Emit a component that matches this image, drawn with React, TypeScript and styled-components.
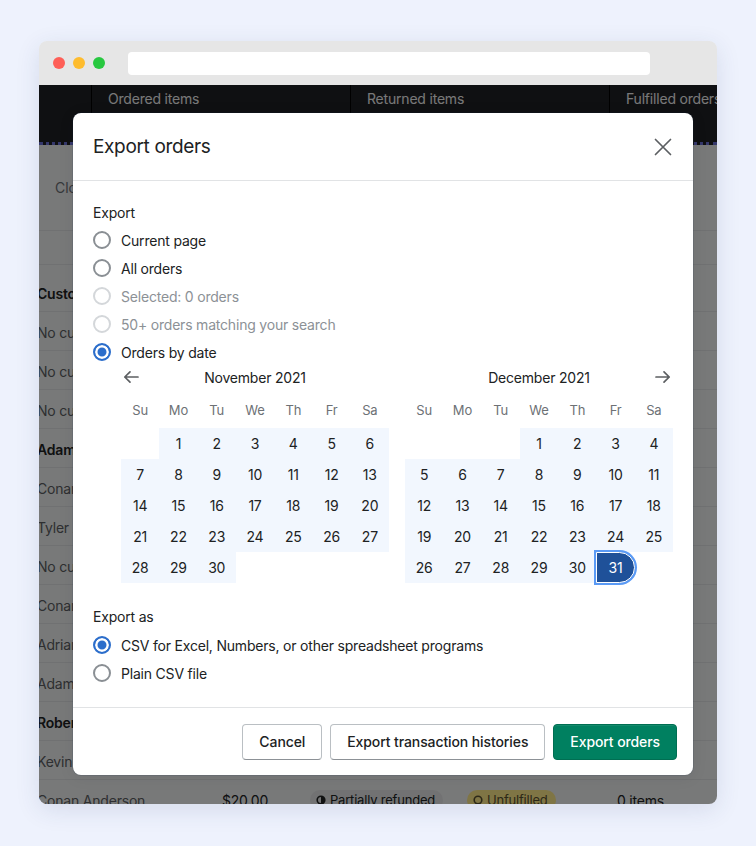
import React from 'react';
import styled, { createGlobalStyle, css } from 'styled-components';

const GlobalStyle = createGlobalStyle`
  html, body {
    margin: 0;
    padding: 0;
  }
  body {
    background: #eef2fd;
    font-family: Inter, "Noto Sans", sans-serif;
    -webkit-font-smoothing: antialiased;
  }
  * {
    box-sizing: border-box;
  }
`

const Stage = styled.div`
  width: 756px;
  height: 846px;
  padding: 41px 39px 0 39px;
`

const Window = styled.div`
  width: 678px;
  height: 763px;
  border-radius: 8px;
  overflow: hidden;
  display: flex;
  flex-direction: column;
  box-shadow: 0 6px 24px rgba(40, 60, 110, 0.12);
`

const TitleBar = styled.div`
  height: 44px;
  flex-shrink: 0;
  background: #e6e6e6;
  display: flex;
  align-items: center;
  padding-left: 14px;
  gap: 8px;
`

const Light = styled.span<{ $color: string }>`
  width: 12px;
  height: 12px;
  border-radius: 50%;
  background: ${p => p.$color};
`

const UrlBar = styled.div`
  margin-left: 15px;
  width: 522px;
  height: 23px;
  border-radius: 4px;
  background: #ffffff;
`

const Viewport = styled.div`
  position: relative;
  flex: 1;
  overflow: hidden;
  background: #f1f2f3;
`

/* ---------- page behind the modal ---------- */

const StatsBar = styled.div`
  height: 60px;
  background: #1e2024;
  display: grid;
  grid-template-columns: 52px 259px 259px 1fr;
  border-bottom: 3px dotted #6a70d8;
`

const StatCell = styled.div`
  border-left: 1px solid #000;
  padding: 5px 16px 0;
  font-size: 14px;
  line-height: 18px;
  color: #f2f2f2;
  white-space: nowrap;
  letter-spacing: -0.2px;
  &:first-child {
    border-left: none;
  }
`

const TabsRow = styled.div`
  height: 86px;
  display: flex;
  align-items: center;
  padding: 0 0 0 16px;
  font-size: 14px;
  color: #6d7175;
  border-bottom: 1px solid #e1e3e5;
`

const FilterRow = styled.div`
  height: 34px;
  border-bottom: 1px solid #e1e3e5;
`

const Table = styled.div`
  margin-left: -2px;
`

const Row = styled.div<{ $head?: boolean }>`
  display: grid;
  grid-template-columns: 185px 88px 157px 150px 1fr;
  align-items: center;
  height: ${p => (p.$head ? 47 : 39)}px;
  padding-top: ${p => (p.$head ? 10 : 2)}px;
  border-bottom: 1px solid #e1e3e5;
  font-size: 14px;
  letter-spacing: -0.2px;
  color: #202223;
  white-space: nowrap;
`

const Name = styled.span<{ $strong?: boolean }>`
  color: ${p => (p.$strong ? '#202223' : '#5c5f62')};
  font-weight: ${p => (p.$strong ? 600 : 400)};
`

const Badge = styled.span<{ $tone: 'info' | 'warn' }>`
  justify-self: start;
  display: inline-flex;
  align-items: center;
  gap: 4px;
  height: 20px;
  padding: 0 8px 0 6px;
  border-radius: 10px;
  font-size: 13px;
  ${p =>
    p.$tone === 'warn'
      ? css`
          background: #ffea8a;
          color: #595130;
        `
      : css`
          background: #e4e5e7;
          color: #202223;
        `}
`

/* ---------- modal ---------- */

const Overlay = styled.div`
  position: absolute;
  inset: 0;
  background: rgba(0, 0, 0, 0.5);
`

const ModalLayer = styled.div`
  position: absolute;
  inset: 0;
  display: flex;
  align-items: flex-start;
  padding: 28px 0 0 34px;
`

const Modal = styled.div`
  width: 620px;
  background: #ffffff;
  border-radius: 8px;
  box-shadow: 0 0 0 1px rgba(6, 44, 82, 0.1), 0 2px 16px rgba(33, 43, 54, 0.08);
  display: flex;
  flex-direction: column;
  color: #202223;
`

const ModalHeader = styled.div`
  height: 68px;
  padding: 0 20px;
  display: flex;
  align-items: center;
  justify-content: space-between;
  border-bottom: 1px solid #e1e3e5;
`

const Title = styled.h2`
  margin: 0;
  font-size: 19px;
  font-weight: 400;
  line-height: 28px;
  letter-spacing: -0.35px;
`

const IconButton = styled.button`
  border: none;
  background: none;
  padding: 0;
  width: 20px;
  height: 20px;
  display: flex;
  align-items: center;
  justify-content: center;
  cursor: pointer;
`

const ModalBody = styled.div`
  padding: 22px 20px 20px;
  letter-spacing: -0.2px;
`

const Label = styled.div<{ $gap?: number }>`
  font-size: 14px;
  line-height: 20px;
  margin-top: ${p => p.$gap ?? 0}px;
`

const RadioList = styled.div<{ $gap?: number }>`
  margin-top: ${p => p.$gap ?? 3}px;
  display: flex;
  flex-direction: column;
`

const RadioRow = styled.label<{ $disabled?: boolean }>`
  height: 28px;
  display: flex;
  align-items: center;
  gap: 10px;
  font-size: 14px;
  color: ${p => (p.$disabled ? '#8c9196' : '#202223')};
`

const RadioDot = styled.span<{ $state: 'off' | 'on' | 'disabled' }>`
  width: 18px;
  height: 18px;
  border-radius: 50%;
  flex-shrink: 0;
  ${p =>
    p.$state === 'on'
      ? css`
          border: 2px solid #2c6ecb;
          background: #2c6ecb;
          box-shadow: inset 0 0 0 2.5px #fff;
        `
      : css`
          border: 2px solid ${p.$state === 'off' ? '#8a8f94' : '#d4d7da'};
          background: #fff;
        `}
`

const Calendars = styled.div`
  margin-left: 28px;
  display: flex;
  gap: 16px;
`

const Month = styled.div`
  width: 268px;
`

const MonthHeader = styled.div`
  height: 22px;
  display: grid;
  grid-template-columns: 24px 1fr 24px;
  align-items: center;
`

const MonthTitle = styled.div`
  text-align: center;
  font-size: 14px;
  line-height: 20px;
  padding-top: 2px;
`

const ArrowSlot = styled.div<{ $side: 'left' | 'right' }>`
  display: flex;
  justify-content: ${p => (p.$side === 'left' ? 'flex-start' : 'flex-end')};
  padding: 0 2px;
`

const Weekdays = styled.div`
  margin-top: 10px;
  height: 24px;
  display: grid;
  grid-template-columns: repeat(7, 1fr);
  align-items: center;
  text-align: center;
  font-size: 13px;
  color: #6d7175;
`

const Days = styled.div`
  margin-top: 6px;
  display: grid;
  grid-template-columns: repeat(7, 1fr);
  grid-auto-rows: 31px;
`

const Day = styled.div<{ $kind: 'empty' | 'range' | 'end' }>`
  display: flex;
  align-items: center;
  justify-content: center;
  font-size: 14px;
  ${p =>
    p.$kind === 'range' &&
    css`
      background: #f2f7fe;
    `}
  ${p =>
    p.$kind === 'end' &&
    css`
      background: #1f5199;
      color: #fff;
      border: 1px solid #fff;
      border-radius: 0 16px 16px 0;
      box-shadow: 0 0 0 2px #5a9af5;
      position: relative;
      z-index: 1;
    `}
`

const Footer = styled.div`
  height: 68px;
  padding: 0 16px;
  border-top: 1px solid #e1e3e5;
  display: flex;
  align-items: center;
  justify-content: flex-end;
  gap: 8px;
`

const Button = styled.button<{ $primary?: boolean }>`
  height: 36px;
  padding: 0 16px;
  border-radius: 4px;
  font-family: inherit;
  font-size: 14px;
  font-weight: 500;
  letter-spacing: -0.1px;
  cursor: pointer;
  ${p =>
    p.$primary
      ? css`
          background: #008060;
          color: #fff;
          border: 1px solid #006e52;
          box-shadow: inset 0 1px 0 rgba(255, 255, 255, 0.08);
        `
      : css`
          background: #fff;
          color: #202223;
          border: 1px solid #babfc3;
          border-bottom-color: #8c9196;
        `}
`

const ArrowIcon = ({ dir }: { dir: 'left' | 'right' }) => (
  <svg width="16" height="16" viewBox="0 0 16 16" fill="none">
    <path
      d={dir === 'left' ? 'M15 8H1.8M7 2.8L1.8 8 7 13.2' : 'M1 8h13.2M9 2.8L14.2 8 9 13.2'}
      stroke="#5c5f62"
      strokeWidth="1.7"
      strokeLinecap="round"
      strokeLinejoin="round"
    />
  </svg>
)

const CloseIcon = () => (
  <svg width="18" height="18" viewBox="0 0 18 18" fill="none">
    <path d="M1.5 1.5l15 15M16.5 1.5l-15 15" stroke="#5c5f62" strokeWidth="1.7" strokeLinecap="round" />
  </svg>
)

const BadgeIcon = ({ half }: { half?: boolean }) => (
  <svg width="10" height="10" viewBox="0 0 10 10">
    <circle cx="5" cy="5" r="3.8" fill="none" stroke="currentColor" strokeWidth="1.6" />
    {half && <path d="M5 1.2A3.8 3.8 0 0 1 5 8.8Z" fill="currentColor" />}
  </svg>
)

const weekdays = ['Su', 'Mo', 'Tu', 'We', 'Th', 'Fr', 'Sa']

interface MonthProps {
  title: string
  offset: number
  length: number
  arrow?: 'left' | 'right'
  endDay?: number
}

const MonthView = ({ title, offset, length, arrow, endDay }: MonthProps) => {
  const cells: (number | null)[] = []
  for (let i = 0; i < offset; i++) cells.push(null)
  for (let d = 1; d <= length; d++) cells.push(d)

  return (
    <Month>
      <MonthHeader>
        <ArrowSlot $side="left">{arrow === 'left' && <ArrowIcon dir="left" />}</ArrowSlot>
        <MonthTitle>{title}</MonthTitle>
        <ArrowSlot $side="right">{arrow === 'right' && <ArrowIcon dir="right" />}</ArrowSlot>
      </MonthHeader>
      <Weekdays>
        {weekdays.map(w => (
          <span key={w}>{w}</span>
        ))}
      </Weekdays>
      <Days>
        {cells.map((d, i) => (
          <Day key={i} $kind={d === null ? 'empty' : d === endDay ? 'end' : 'range'}>
            {d}
          </Day>
        ))}
      </Days>
    </Month>
  )
}

const rows = [
  { name: 'No customer' },
  { name: 'No customer' },
  { name: 'No customer' },
  { name: 'Adam Smith', strong: true },
  { name: 'Conan Anderson' },
  { name: 'Tyler Adams' },
  { name: 'No customer' },
  { name: 'Conan Anderson' },
  { name: 'Adrian Miller' },
  { name: 'Adam Smith' },
  { name: 'Robert Brown', strong: true },
  { name: 'Kevin Jones' },
  { name: 'Conan Anderson' },
]

const exportOptions = [
  { label: 'Current page', state: 'off' as const },
  { label: 'All orders', state: 'off' as const },
  { label: 'Selected: 0 orders', state: 'disabled' as const },
  { label: '50+ orders matching your search', state: 'disabled' as const },
  { label: 'Orders by date', state: 'on' as const },
]

const App = () => {
  return (
    <Stage>
      <GlobalStyle />
      <Window>
        <TitleBar>
          <Light $color="#fe5f57" />
          <Light $color="#febc2e" />
          <Light $color="#28c840" />
          <UrlBar />
        </TitleBar>
        <Viewport>
          <StatsBar>
            <StatCell />
            <StatCell>Ordered items</StatCell>
            <StatCell>Returned items</StatCell>
            <StatCell>Fulfilled orders</StatCell>
          </StatsBar>
          <TabsRow>Closed</TabsRow>
          <FilterRow />
          <Table>
            <Row $head>
              <Name $strong>Customer</Name>
              <span>Total</span>
              <span>Payment status</span>
              <span>Fulfillment status</span>
              <span>Items</span>
            </Row>
            {rows.map((r, i) => (
              <Row key={i}>
                <Name $strong={r.strong}>{r.name}</Name>
                <span>$20.00</span>
                <Badge $tone="info">
                  <BadgeIcon half />
                  Partially refunded
                </Badge>
                <Badge $tone="warn">
                  <BadgeIcon />
                  Unfulfilled
                </Badge>
                <span>0 items</span>
              </Row>
            ))}
          </Table>

          <Overlay />

          <ModalLayer>
            <Modal>
              <ModalHeader>
                <Title>Export orders</Title>
                <IconButton aria-label="Close">
                  <CloseIcon />
                </IconButton>
              </ModalHeader>

              <ModalBody>
                <Label>Export</Label>
                <RadioList>
                  {exportOptions.map(o => (
                    <RadioRow key={o.label} $disabled={o.state === 'disabled'}>
                      <RadioDot $state={o.state} />
                      {o.label}
                    </RadioRow>
                  ))}
                </RadioList>

                <Calendars>
                  <MonthView title="November 2021" offset={1} length={30} arrow="left" />
                  <MonthView title="December 2021" offset={3} length={31} arrow="right" endDay={31} />
                </Calendars>

                <Label $gap={24}>Export as</Label>
                <RadioList $gap={4}>
                  <RadioRow>
                    <RadioDot $state="on" />
                    CSV for Excel, Numbers, or other spreadsheet programs
                  </RadioRow>
                  <RadioRow>
                    <RadioDot $state="off" />
                    Plain CSV file
                  </RadioRow>
                </RadioList>
              </ModalBody>

              <Footer>
                <Button>Cancel</Button>
                <Button>Export transaction histories</Button>
                <Button $primary>Export orders</Button>
              </Footer>
            </Modal>
          </ModalLayer>
        </Viewport>
      </Window>
    </Stage>
  )
}

export default App
